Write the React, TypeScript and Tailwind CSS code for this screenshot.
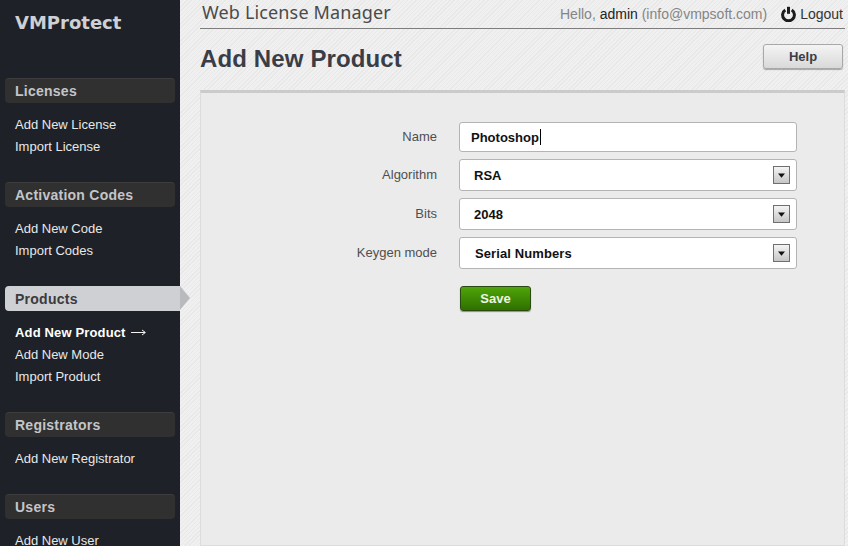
const MENU = [
  { title: 'Licenses', items: ['Add New License', 'Import License'] },
  { title: 'Activation Codes', items: ['Add New Code', 'Import Codes'] },
  { title: 'Products', items: ['Add New Product', 'Add New Mode', 'Import Product'], active: true },
  { title: 'Registrators', items: ['Add New Registrator'] },
  { title: 'Users', items: ['Add New User'] },
];

const FIELDS = [
  { label: 'Name', value: 'Photoshop' },
  { label: 'Algorithm', value: 'RSA' },
  { label: 'Bits', value: '2048' },
  { label: 'Keygen mode', value: 'Serial Numbers' },
];

const PowerIcon = () => (
  <svg width="15" height="16" viewBox="0 0 15 16" fill="none" stroke="#1c1c1c" strokeWidth="3" strokeLinecap="butt">
    <path d="M4.3 4a5.9 5.9 0 1 0 6.4 0" />
    <path d="M7.5 0.8v7" />
  </svg>
);

const LongArrow = () => (
  <svg className="ml-[5px] inline-block align-[1px]" width="15" height="7" viewBox="0 0 15 7" fill="none" stroke="#f2f2f2" strokeWidth="1">
    <path d="M0 3.5h14" />
    <path d="M11 1l3.4 2.5L11 6" />
  </svg>
);

const SelectArrow = () => (
  <span className="absolute right-[6px] top-[6px] flex h-[18px] w-[17px] items-center justify-center border border-[#6f6f6f] bg-gradient-to-b from-[#f4f4f4] to-[#c6c6c6]">
    <svg width="7" height="5" viewBox="0 0 7 5"><path d="M0 0.5h7L3.5 4.8z" fill="#111" /></svg>
  </span>
);

const App = () => {
  return (
    <div className="flex h-[546px] w-[848px] overflow-hidden font-['Liberation_Sans',Arial,sans-serif] bg-[repeating-linear-gradient(135deg,#e8e8e8_0px,#e8e8e8_1px,#f0f0f0_1px,#f0f0f0_3px)]">
      {/* Sidebar */}
      <aside className="w-[180px] shrink-0 bg-[#1e2127]">
        <div className="h-[78px] pl-[15px] pt-[10px] font-['DejaVu_Sans',sans-serif] text-[18px] leading-[26px] font-bold text-[#cfd0d3]">
          VMProtect
        </div>
        {MENU.map(section => (
          <div key={section.title} className="mb-[24px]">
            <div
              className={`relative ml-[5px] h-[25px] rounded-l-[4px] pl-[10px] text-[14px] font-bold tracking-[0.25px] ${
                section.active
                  ? 'w-[175px] bg-[#cfd0d3] leading-[26px] text-[#3a3a3f]'
                  : 'w-[170px] rounded-r-[4px] border-t border-[#3d3d3d] bg-[#303030] leading-[24px] text-[#c4c5c8]'
              }`}
            >
              {section.title}
              {section.active && (
                <span className="absolute top-0 left-full h-0 w-0 border-y-[12.5px] border-l-[10px] border-y-transparent border-l-[#b9babd]" />
              )}
            </div>
            <ul className="mt-[11px] pl-[15px] text-[13px] leading-[22px] text-[#e8e8e8]">
              {section.items.map((item, i) => (
                <li key={item} className={section.active && i === 0 ? 'font-bold tracking-[0.15px] text-white' : ''}>
                  {item}
                  {section.active && i === 0 && <LongArrow />}
                </li>
              ))}
            </ul>
          </div>
        ))}
      </aside>

      {/* Main */}
      <main className="flex min-w-0 flex-1 flex-col pl-[20px] pr-[3px]">
        <header className="flex h-[29px] shrink-0 items-center justify-between border-b border-[#7d7d7d] pr-[2px]">
          <span className="pb-[5px] pl-[2px] font-['Noto_Sans',sans-serif] text-[18px] leading-[22px] tracking-[0.15px] text-[#4a4a4a]">Web License Manager</span>
          <div className="flex items-center text-[14px] text-[#858585]">
            <span>
              Hello, <span className="text-[#222]">admin</span> (info@vmpsoft.com)
            </span>
            <span className="ml-[14px] mr-[4px] flex"><PowerIcon /></span>
            <span className="text-[#333]">Logout</span>
          </div>
        </header>

        <div className="flex h-[61px] shrink-0 items-start justify-between pr-[2px]">
          <h1 className="pt-[15px] text-[24px] leading-[30px] font-bold tracking-[0.13px] text-[#3a3d46]">Add New Product</h1>
          <button className="mt-[15px] h-[25px] w-[80px] rounded-[3px] border border-[#a8a8a8] bg-gradient-to-b from-[#f4f4f4] to-[#d9d9d9] text-[13px] font-bold text-[#3a3d46] shadow-[0_1px_1px_rgba(0,0,0,0.3)]">
            Help
          </button>
        </div>

        <section className="flex-1 border border-t-[3px] border-[#dcdcdc] border-t-[#cbcbcb] bg-[#ebebeb] pt-[29px]">
          <form className="flex flex-col gap-[7px]">
            {FIELDS.map((field, i) => (
              <div key={field.label} className="flex items-center">
                <label className="w-[236px] text-right text-[13px] text-[#4f4f4f]">{field.label}</label>
                <div
                  className={`relative ml-[22px] w-[338px] rounded-[3px] border border-[#b4b4b4] bg-white text-[13px] font-bold text-[#111] ${
                    i === 0 ? 'h-[30px] pl-[11px] leading-[29px]' : i === 3 ? 'h-[32px] pl-[15px] leading-[32px] tracking-[0.1px]' : 'h-[32px] pl-[14px] leading-[32px]'
                  }`}
                >
                  {field.value}
                  {i === 0 && <span className="ml-px inline-block h-[16px] w-px bg-black align-[-3px]" />}
                  {i > 0 && <SelectArrow />}
                </div>
              </div>
            ))}
            <div className="mt-[10px] pl-[259px]">
              <button
                type="button"
                className="h-[25px] w-[71px] rounded-[3px] border border-[#2b4a10] bg-gradient-to-b from-[#4fa50a] to-[#2f7000] text-[13px] font-bold text-[#eef5e4] shadow-[0_1px_1px_rgba(0,0,0,0.4)]"
              >
                Save
              </button>
            </div>
          </form>
        </section>
      </main>
    </div>
  );
};

export default App;
